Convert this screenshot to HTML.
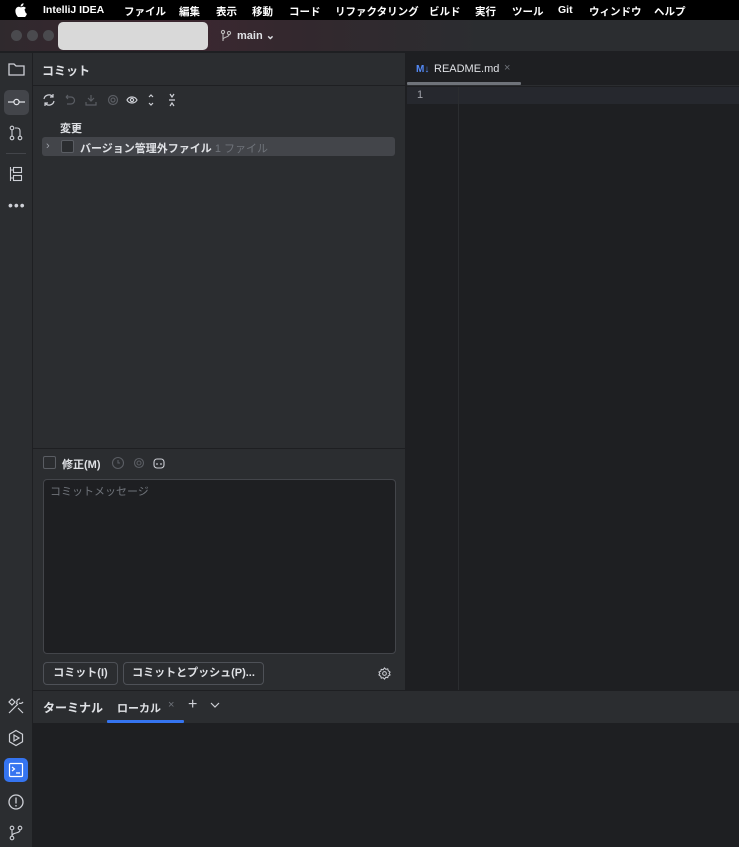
<!DOCTYPE html>
<html><head><meta charset="utf-8"><style>
*{box-sizing:border-box;margin:0;padding:0}
body{width:739px;height:847px;overflow:hidden;background:#1e1f22;font-family:"Liberation Sans","Noto Sans CJK JP",sans-serif;color:#dfe1e5;font-size:11px;position:relative}
.a{position:absolute}
.menu{left:0;top:0;width:739px;height:20px;background:#000;color:#fff;font-size:10.5px;font-weight:bold}
.menu span{position:absolute;top:4px}
.title{left:0;top:20px;width:739px;height:32px;background:linear-gradient(90deg,#2f292d 0%,#3d2731 22%,#33282e 40%,#2b2d30 65%);border-bottom:1px solid #1e1f22}
.dot{width:11px;height:11px;border-radius:50%;background:#4a4a4e;top:10px}
.strip{left:0;top:53px;width:33px;height:794px;background:#2b2d30;border-right:1px solid #1e1f22}
.panel{left:33px;top:53px;width:373px;height:637px;background:#2b2d30;border-right:1px solid #1e1f22}
svg{position:absolute}
</style></head><body>
<div class="a menu">
<svg style="left:15px;top:3px" width="12" height="14" viewBox="0 0 12 14"><path d="M9.5 7.4c0-1.6 1.3-2.3 1.4-2.4-.8-1.1-2-1.3-2.4-1.3-1-.1-2 .6-2.5.6s-1.3-.6-2.2-.6C2.7 3.7 1.6 4.4 1 5.5-.3 7.700.7 11 2 12.800c.6.9 1.300 1.900 2.200 1.800.900 0 1.200-.6 2.300-.6s1.400.6 2.300.6c1 0 1.600-.9 2.200-1.800.7-1 1-2 1-2-.1 0-1.900-.7-2-3.400zM7.800 2.500C8.300 1.900 8.600 1.100 8.500.3c-.7 0-1.600.5-2.100 1.100-.5.500-.9 1.300-.8 2.100.8.1 1.600-.4 2.200-1z" fill="#fff"/></svg>
<span style="left:43px">IntelliJ IDEA</span><span style="left:124px">ファイル</span><span style="left:179px">編集</span><span style="left:216px">表示</span><span style="left:252px">移動</span><span style="left:289px">コード</span><span style="left:335px">リファクタリング</span><span style="left:429px">ビルド</span><span style="left:475px">実行</span><span style="left:512px">ツール</span><span style="left:558px">Git</span><span style="left:589px">ウィンドウ</span><span style="left:654px">ヘルプ</span>
</div>
<div class="a title">
<div class="a dot" style="left:11px"></div><div class="a dot" style="left:27px"></div><div class="a dot" style="left:43px"></div>
<div class="a" style="left:58px;top:2px;width:150px;height:28px;background:#d9d9d9;border-radius:5px"></div>
<svg style="left:220px;top:9px" width="12" height="14" viewBox="0 0 12 14" fill="none" stroke="#bbb" stroke-width="1.1"><circle cx="3" cy="3" r="1.6"/><circle cx="9" cy="4" r="1.6"/><path d="M3 4.6V12M9 5.6c0 3-6 2-6 5"/></svg>
<span class="a" style="left:237px;top:9px;font-size:11px;font-weight:bold;color:#dfe1e5">main ⌄</span>
</div>
<div class="a strip">
<svg style="left:8px;top:9px" width="17" height="14" viewBox="0 0 17 14" fill="none" stroke="#ced0d6" stroke-width="1.3"><path d="M1 2h5l2 2h8v9H1z"/></svg>
<div class="a" style="left:4px;top:37px;width:25px;height:25px;background:#43454a;border-radius:5px"></div>
<svg style="left:8px;top:43px" width="17" height="12" viewBox="0 0 17 12" fill="none" stroke="#dfe1e5" stroke-width="1.3"><circle cx="8.5" cy="6" r="2.6"/><path d="M0 6h5.9M11.1 6H17"/></svg>
<svg style="left:9px;top:72px" width="14" height="16" viewBox="0 0 14 16" fill="none" stroke="#ced0d6" stroke-width="1.1"><circle cx="3" cy="3" r="1.8"/><circle cx="3" cy="13" r="1.8"/><circle cx="11" cy="13" r="1.8"/><path d="M3 5v6M11 11V6c0-2-1-3-3-3H6"/></svg>
<div class="a" style="left:6px;top:100px;width:20px;height:1px;background:#43454a"></div>
<svg style="left:9px;top:113px" width="14" height="16" viewBox="0 0 14 16" fill="none" stroke="#ced0d6" stroke-width="1.1"><path d="M1.5 1v14M1.5 4h3M1.5 12h3"/><rect x="4.5" y="1.5" width="8" height="5"/><rect x="4.5" y="9.5" width="8" height="5"/></svg>
<span class="a" style="left:8px;top:144px;color:#ced0d6;font-size:14px;letter-spacing:1px">•••</span>
<svg style="left:7px;top:644px" width="18" height="18" viewBox="0 0 18 18" fill="none" stroke="#ced0d6" stroke-width="1.2"><path d="M2 16L11 7M5 2l3 3-3 3-3-3zM11 11l5 5M13 2a3 3 0 0 0-3 4l-1 1M16 5a3 3 0 0 1-4 1"/></svg>
<svg style="left:7px;top:676px" width="18" height="18" viewBox="0 0 18 18" fill="none" stroke="#ced0d6" stroke-width="1.2"><path d="M9 1.5l6.500 3.700v7.600L9 16.500 2.500 12.800V5.200z"/><path d="M7 6v6l5-3z"/></svg>
<div class="a" style="left:4px;top:705px;width:24px;height:24px;background:#3574f0;border-radius:5px"></div>
<svg style="left:8px;top:709px" width="16" height="16" viewBox="0 0 16 16" fill="none" stroke="#fff" stroke-width="1.2"><rect x="1.5" y="1.5" width="13" height="13" rx="1"/><path d="M4 5l2.500 2L4 9M8 11h4"/></svg>
<svg style="left:7px;top:740px" width="18" height="18" viewBox="0 0 18 18" fill="none" stroke="#ced0d6" stroke-width="1.3"><circle cx="9" cy="9" r="7"/><path d="M9 4.500v6M9 12v1.500"/></svg>
<svg style="left:9px;top:772px" width="14" height="16" viewBox="0 0 14 16" fill="none" stroke="#ced0d6" stroke-width="1.1"><circle cx="3" cy="3" r="1.8"/><circle cx="11" cy="3" r="1.8"/><circle cx="3" cy="13" r="1.8"/><path d="M3 5v6M11 5c0 4-8 2-8 6"/></svg>
</div>
<div class="a panel">
<div class="a" style="left:9px;top:9px;font-weight:bold;font-size:12px">コミット</div>
<div class="a" style="left:0;top:32px;width:372px;height:1px;background:#1e1f22"></div>
<svg style="left:9px;top:40px" width="150" height="14" viewBox="0 0 150 14" fill="none" stroke-width="1.2">
<path d="M2 6a5 5 0 0 1 9-2M12 8a5 5 0 0 1-9 2M11 1v3H8M3 13v-3h3" stroke="#ced0d6"/>
<path d="M24 4h5a3 3 0 0 1 0 7h-4M24 4l2-2M24 4l2 2" stroke="#5a5d63"/>
<path d="M49 2v6M46 5l3 3 3-3M44 9v3h10V9" stroke="#5a5d63"/>
<circle cx="71" cy="7" r="4.500" stroke="#5a5d63"/><circle cx="71" cy="7" r="2" stroke="#5a5d63"/>
<path d="M85 7c2-4 8-4 10 0-2 4-8 4-10 0z" stroke="#ced0d6"/><circle cx="90" cy="7" r="1.600" stroke="#ced0d6"/>
<path d="M107 4l2-2 2 2M107 10l2 2 2-2" stroke="#ced0d6"/>
<path d="M128 1l2 3 2-3M128 13l2-3 2 3M127 7h6" stroke="#ced0d6"/>
</svg>
<div class="a" style="left:27px;top:67px;font-weight:bold">変更</div>
<div class="a" style="left:9px;top:84px;width:353px;height:19px;background:#43454a;border-radius:3px"></div>
<span class="a" style="left:13px;top:87px;color:#9da0a8">›</span>
<div class="a" style="left:28px;top:87px;width:13px;height:13px;border:1px solid #5a5d63;border-radius:2px;background:#2b2d30"></div>
<div class="a" style="left:47px;top:87px;font-weight:bold;color:#dfe1e5">バージョン管理外ファイル <span style="font-weight:normal;color:#6f737a">1 ファイル</span></div>
<div class="a" style="left:0;top:395px;width:372px;height:1px;background:#1e1f22"></div>
<div class="a" style="left:10px;top:403px;width:13px;height:13px;border:1px solid #5a5d63;border-radius:2px"></div>
<div class="a" style="left:29px;top:403px;font-weight:bold">修正(M)</div>
<svg style="left:78px;top:403px" width="60" height="14" viewBox="0 0 60 14" fill="none" stroke-width="1.1"><circle cx="7" cy="7" r="5.500" stroke="#5a5d63"/><path d="M7 4v3h2" stroke="#5a5d63"/><circle cx="28" cy="7" r="4.500" stroke="#5a5d63"/><circle cx="28" cy="7" r="2" stroke="#5a5d63"/><rect x="43" y="3" width="10" height="9" rx="3" stroke="#ced0d6"/><path d="M46 7v2M50 7v2" stroke="#ced0d6"/></svg>
<div class="a" style="left:10px;top:426px;width:353px;height:175px;background:#1e1f22;border:1px solid #43454a;border-radius:4px"></div>
<div class="a" style="left:17px;top:430px;color:#6f737a">コミットメッセージ</div>
<div class="a" style="left:10px;top:609px;width:75px;height:23px;border:1px solid #4e5157;border-radius:4px;text-align:center;line-height:21px;font-weight:bold">コミット(I)</div>
<div class="a" style="left:90px;top:609px;width:141px;height:23px;border:1px solid #4e5157;border-radius:4px;text-align:center;line-height:21px;font-weight:bold">コミットとプッシュ(P)...</div>
<svg style="left:345px;top:614px" width="13" height="13" viewBox="0 0 14 14" fill="none" stroke="#ced0d6" stroke-width="1.1"><circle cx="7" cy="7" r="2"/><path d="M7 1l1.500 1.500 2-.5.5 2L13 5.500 12 7l1 1.500-2 1-.5 2-2-.5L7 13l-1.500-1.500-2 .5-.5-2L1 8.500 2 7 1 5.500l2-1 .5-2 2 .5z"/></svg>
</div>
<div class="a" style="left:407px;top:53px;width:332px;height:33px;background:#1e1f22;border-bottom:1px solid #2b2d30"></div>
<div class="a" style="left:416px;top:64px;font-size:10px;font-weight:bold;color:#548af7">M↓</div>
<div class="a" style="left:434px;top:63px;color:#dfe1e5">README.md</div>
<div class="a" style="left:504px;top:62px;color:#6f737a">×</div>
<div class="a" style="left:407px;top:82px;width:114px;height:3px;background:#6f737a;border-radius:1px"></div>
<div class="a" style="left:407px;top:87px;width:332px;height:17px;background:#26282e"></div>
<div class="a" style="left:417px;top:89px;color:#a1a3ab">1</div>
<div class="a" style="left:458px;top:87px;width:1px;height:603px;background:#2b2d30"></div>
<div class="a" style="left:33px;top:690px;width:706px;height:33px;background:#2b2d30;border-top:1px solid #1e1f22"></div>
<div class="a" style="left:43px;top:699px;font-weight:bold;font-size:12px">ターミナル</div>
<div class="a" style="left:117px;top:700px;font-weight:bold">ローカル</div>
<div class="a" style="left:168px;top:699px;color:#6f737a">×</div>
<div class="a" style="left:188px;top:696px;color:#ced0d6;font-size:16px">+</div>
<svg style="left:210px;top:702px" width="10" height="7" viewBox="0 0 10 7" fill="none" stroke="#ced0d6" stroke-width="1.2"><path d="M1 1l4 4 4-4"/></svg>
<div class="a" style="left:107px;top:720px;width:77px;height:3px;background:#3574f0;border-radius:1px"></div>
</body></html>
